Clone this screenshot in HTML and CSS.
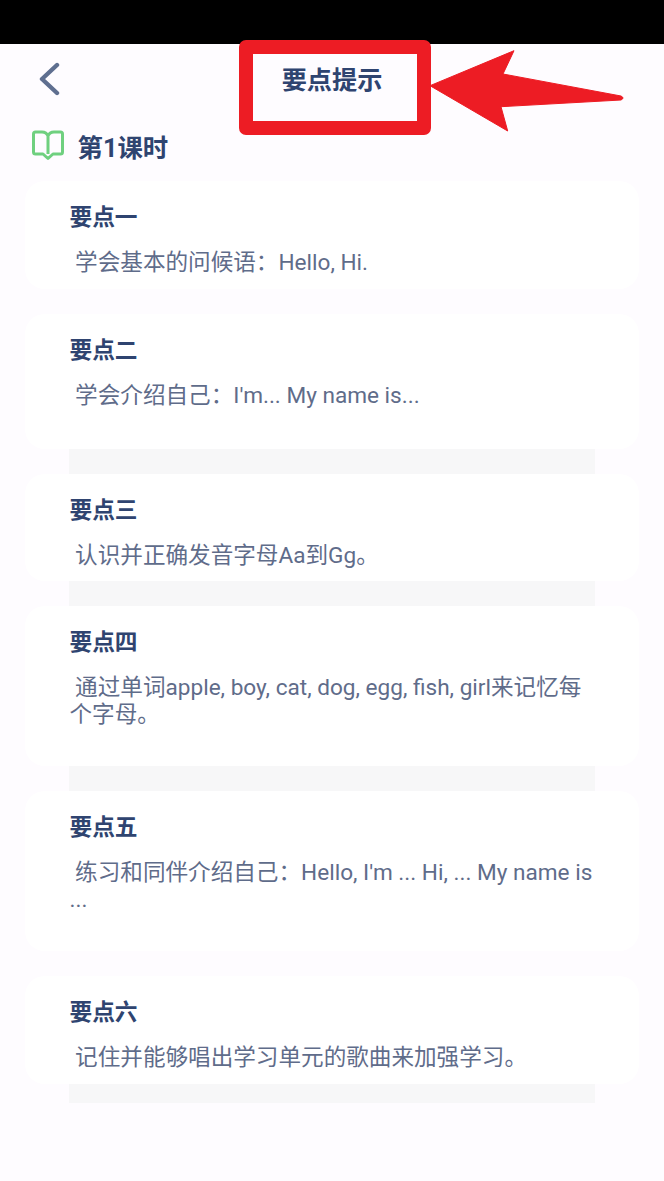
FILE: index.html
```html
<!DOCTYPE html>
<html lang="zh-CN">
<head>
<meta charset="utf-8">
<title>要点提示</title>
<link rel="stylesheet" href="styles.css">
</head>
<body>
<div class="status-bar"></div>
<header class="nav">
  <svg class="back" viewBox="0 0 24 34" aria-hidden="true"><path d="M20 3 L5 17 L20 31" fill="none" stroke="#5f6f90" stroke-width="4.4" stroke-linecap="round" stroke-linejoin="round"/></svg>
  <h1 class="nav-title">要点提示</h1>
</header>
<section class="lesson">
  <svg class="book" viewBox="0 0 32 32" aria-hidden="true"><path d="M16 6C15 3.500 13 2 10 2H3.500C2.300 2 1.500 2.800 1.500 4V22C1.500 23.200 2.300 24 3.500 24H11L16 28.500L21 24H28.500C29.700 24 30.500 23.200 30.500 22V4C30.500 2.800 29.700 2 28.500 2H22C19 2 17 3.500 16 6ZM16 6V24" fill="none" stroke="#6fd07f" stroke-width="3" stroke-linejoin="round"/></svg>
  <h2 class="lesson-title">第1课时</h2>
</section>
<main class="list">
  <article class="card card-s"><h3>要点一</h3><p>&nbsp;学会基本的问候语：Hello, Hi.</p></article>
  <div class="gap"></div>
  <article class="card card-m"><h3>要点二</h3><p>&nbsp;学会介绍自己：I'm... My name is...</p></article>
  <div class="gap strip"></div>
  <article class="card card-s"><h3>要点三</h3><p>&nbsp;认识并正确发音字母Aa到Gg。</p></article>
  <div class="gap strip"></div>
  <article class="card card-l"><h3>要点四</h3><p>&nbsp;通过单词apple, boy, cat, dog, egg, fish, girl来记忆每个字母。</p></article>
  <div class="gap strip"></div>
  <article class="card card-l"><h3>要点五</h3><p>&nbsp;练习和同伴介绍自己：Hello, I'm ... Hi, ... My name is ...</p></article>
  <div class="gap"></div>
  <article class="card card-s"><h3>要点六</h3><p>&nbsp;记住并能够唱出学习单元的歌曲来加强学习。</p></article>
  <div class="gap gap-end strip"></div>
</main>
<div class="highlight"></div>
<svg class="arrow" viewBox="0 0 200 90" aria-hidden="true"><path d="M0 35.700 L84 0.700 L73 24 L191 46 Q195 48 191 50 L71 56.700 L77.700 81 Z" fill="#ed1c24" stroke="#ed1c24" stroke-width="1" stroke-linejoin="round"/></svg>
</body>
</html>
```
FILE: styles.css
```css
* { box-sizing: border-box; }
html, body { margin: 0; padding: 0; }
body {
  width: 664px;
  height: 1181px;
  position: relative;
  overflow: hidden;
  background: #fefcff;
  font-family: Roboto, "Noto Sans CJK SC", sans-serif;
}
.status-bar { height: 44px; background: #000; }
.nav {
  position: relative;
  height: 72px;
  display: flex;
  justify-content: center;
  align-items: flex-start;
}
.back {
  position: absolute;
  left: 37px;
  top: 18px;
  width: 24px;
  height: 34px;
}
.nav-title {
  margin: 18.500px 0 0;
  font-size: 25.200px;
  line-height: 36px;
  font-weight: 700;
  color: #2f4470;
}
.lesson {
  height: 65px;
  padding: 14px 0 0 32px;
  display: flex;
  align-items: flex-start;
  gap: 13.500px;
}
.book { width: 32px; height: 32px; flex: none; }
.lesson-title {
  margin: 0;
  font-size: 25.400px;
  line-height: 36px;
  font-weight: 700;
  color: #2f4470;
}
.list { display: flex; flex-direction: column; padding: 0 25px; }
.card {
  background: #fff;
  border-radius: 20px;
  padding: 21px 44px 0 44.500px;
}
.card-s { height: 107.500px; }
.card-m { height: 135px; }
.card-l { height: 160px; }
.card h3 {
  margin: 0;
  font-size: 22.700px;
  line-height: 32px;
  font-weight: 700;
  color: #2f4470;
}
.card p {
  margin: 15px 0 0;
  font-size: 22.600px;
  line-height: 27px;
  color: #5f6c8a;
}
.gap { height: 25px; margin: 0 44px; }
.strip { background: #f7f7f8; }
.gap-end { height: 19.500px; }
.highlight {
  position: absolute;
  left: 239px;
  top: 40px;
  width: 191.500px;
  height: 94.500px;
  border: 14.500px solid #ed1c24;
  border-radius: 7px;
}
.arrow {
  position: absolute;
  left: 430px;
  top: 50px;
  width: 200px;
  height: 90px;
}
```
